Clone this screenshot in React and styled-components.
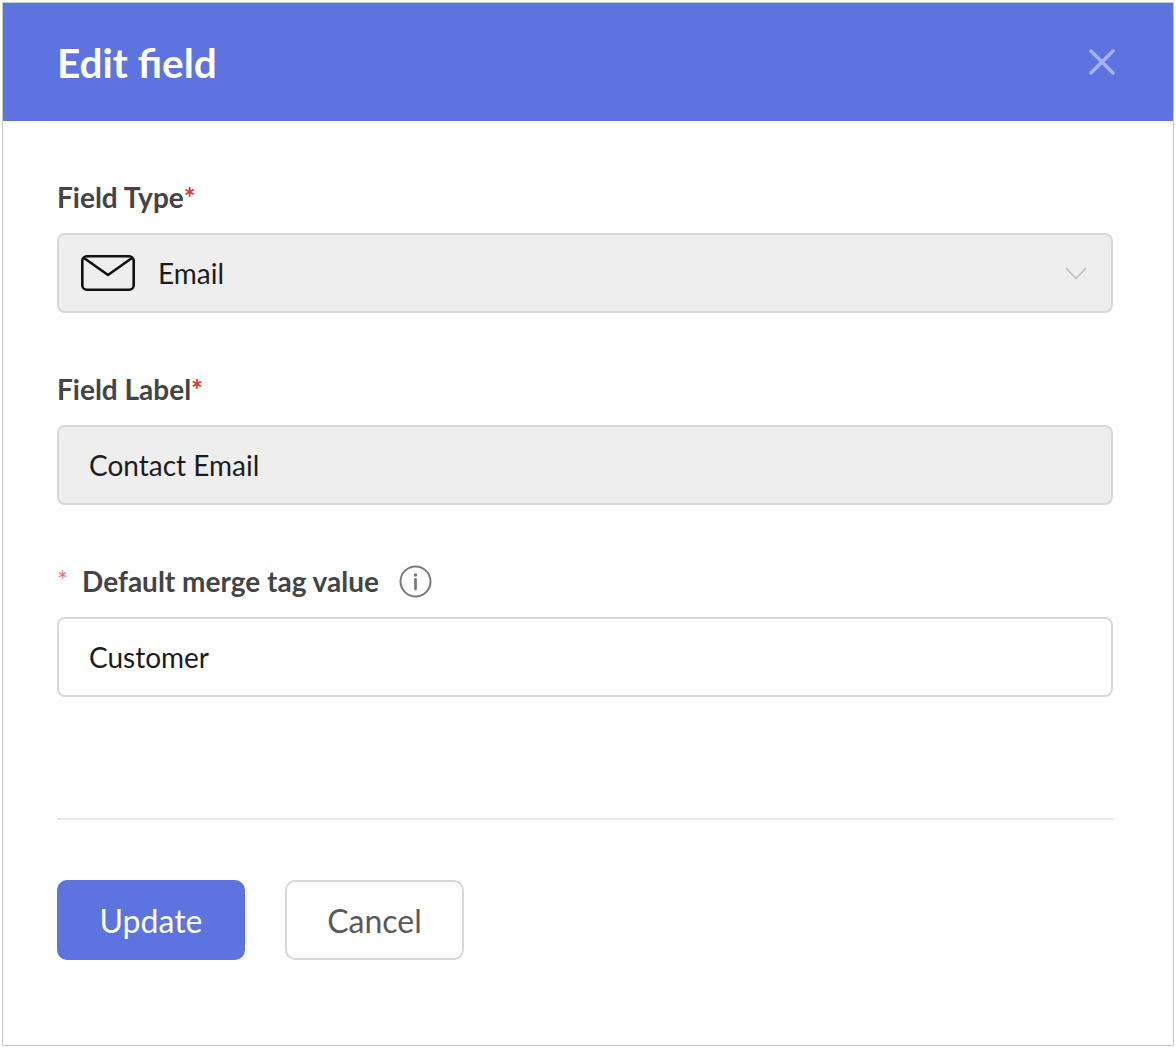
import React from 'react'
import styled, { createGlobalStyle } from 'styled-components'

const GlobalStyle = createGlobalStyle`
	html, body {
		margin: 0;
		padding: 0;
		background: #ffffff;
	}
	body {
		font-family: Lato, "Open Sans", sans-serif;
	}
`

const Dialog = styled.div`
	margin: 2px;
	width: 1170px;
	height: 1042px;
	border: 1px solid #c6c9ce;
	display: flex;
	flex-direction: column;
	background: #ffffff;
`

const Header = styled.div`
	height: 118px;
	flex-shrink: 0;
	background: #5d73e0;
	display: flex;
	align-items: center;
	justify-content: space-between;
	padding: 0 56px 0 54px;
`

const Title = styled.h1`
	margin: 0;
	color: #ffffff;
	font: 700 40.5px Lato, sans-serif;
`

const CloseButton = styled.button`
	border: 0;
	background: transparent;
	padding: 0;
	width: 30px;
	height: 30px;
	display: flex;
	align-items: center;
	justify-content: center;
	cursor: pointer;
`

const Body = styled.div`
	flex: 1;
	display: flex;
	flex-direction: column;
	padding: 59px 60px 0 54px;
`

const Field = styled.div`
	display: flex;
	flex-direction: column;
	gap: 19px;
	margin-bottom: ${props => (props.$last ? 0 : 59)}px;
`

const Label = styled.label`
	display: flex;
	align-items: center;
	height: 34px;
	font: 700 28px/34px Lato, sans-serif;
	color: #444444;
`

const Star = styled.span`
	color: #d63a2f;
`

const LeadStar = styled.span`
	color: #e57373;
	font: 400 26px/26px Lato, sans-serif;
	align-self: flex-start;
	margin: 4px 14px 0 0;
`

const InfoIcon = styled.span`
	display: inline-flex;
	margin-left: 20px;
`

const Box = styled.div`
	height: 80px;
	box-sizing: border-box;
	border: 2px solid #d8d8d8;
	border-radius: 8px;
	background: ${props => (props.$filled ? '#eeeeee' : '#ffffff')};
	display: flex;
	align-items: center;
	padding: ${props => (props.$select ? '0 24px 0 22px' : '0 30px')};
	font: 400 28px Lato, sans-serif;
	color: #1c1c1c;
`

const SelectValue = styled.div`
	flex: 1;
	display: flex;
	align-items: center;
	gap: 23px;
`

const Divider = styled.hr`
	margin: 121px 0 0;
	border: 0;
	height: 2px;
	background: #e8e8e8;
`

const Actions = styled.div`
	display: flex;
	gap: 40px;
	margin-top: 60px;
`

const Button = styled.button`
	height: 80px;
	box-sizing: border-box;
	padding: 0;
	width: ${props => props.$width}px;
	border-radius: 10px;
	font: 400 32px Lato, sans-serif;
	cursor: pointer;
	border: 2px solid ${props => (props.$primary ? '#5d73e0' : '#d8d8d8')};
	background: ${props => (props.$primary ? '#5d73e0' : '#ffffff')};
	color: ${props => (props.$primary ? '#ffffff' : '#5a5a5a')};
`

const CloseIcon = () => (
	<svg width="26" height="26" viewBox="0 0 26 26">
		<path d="M2 2 L24 24 M24 2 L2 24" stroke="#a7b3f7" strokeWidth="3.4" strokeLinecap="round" />
	</svg>
)

const MailIcon = () => (
	<svg width="54" height="36" viewBox="0 0 54 36" fill="none">
		<rect x="1.3" y="1.3" width="51.4" height="33.4" rx="4.5" stroke="#111" strokeWidth="2.6" />
		<path d="M3 3 L27 20 L51 3" stroke="#111" strokeWidth="2.6" strokeLinejoin="round" />
	</svg>
)

const Chevron = () => (
	<svg width="22" height="13" viewBox="0 0 22 13" fill="none">
		<path d="M1 1 L11 11.5 L21 1" stroke="#bdbdbd" strokeWidth="1.5" />
	</svg>
)

const Info = () => (
	<svg width="33" height="33" viewBox="0 0 33 33" fill="none">
		<circle cx="16.5" cy="16.5" r="15" stroke="#7a7a7a" strokeWidth="2" />
		<circle cx="16.5" cy="10" r="1.8" fill="#7a7a7a" />
		<path d="M16.5 14.5 V24" stroke="#7a7a7a" strokeWidth="2.8" strokeLinecap="round" />
	</svg>
)

export default function App() {
	return (
		<>
			<GlobalStyle />
			<Dialog>
				<Header>
					<Title>Edit field</Title>
					<CloseButton aria-label="Close">
						<CloseIcon />
					</CloseButton>
				</Header>
				<Body>
					<Field>
						<Label>Field Type<Star>*</Star></Label>
						<Box $filled $select>
							<SelectValue>
								<MailIcon />
								<span>Email</span>
							</SelectValue>
							<Chevron />
						</Box>
					</Field>
					<Field>
						<Label>Field Label<Star>*</Star></Label>
						<Box $filled>Contact Email</Box>
					</Field>
					<Field $last>
						<Label>
							<LeadStar>*</LeadStar>
							Default merge tag value
							<InfoIcon><Info /></InfoIcon>
						</Label>
						<Box>Customer</Box>
					</Field>
					<Divider />
					<Actions>
						<Button $primary $width={188}>Update</Button>
						<Button $width={179}>Cancel</Button>
					</Actions>
				</Body>
			</Dialog>
		</>
	)
}
